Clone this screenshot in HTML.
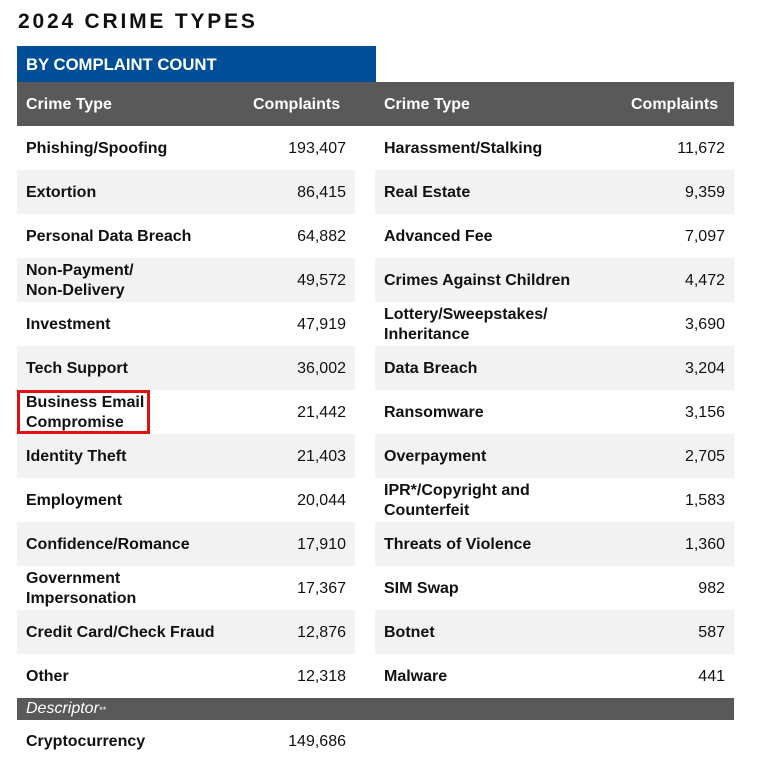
<!DOCTYPE html><html><head><style>
body{margin:0;width:757px;height:761px;background:#fff;font-family:"Liberation Sans",Arial,sans-serif;position:relative;overflow:hidden}
.t{position:absolute;left:18px;top:10px;font-size:21px;font-weight:bold;letter-spacing:2.8px;color:#111}
.blue{position:absolute;left:17px;top:46px;width:359px;height:36px;background:#004e98;color:#fff;font-weight:bold;font-size:16.7px;line-height:38px;box-sizing:border-box;padding-left:9px}
.hdr{position:absolute;left:17px;top:82px;width:717px;height:44px;background:#595959}
.c{position:absolute;font-size:16px;font-weight:bold;color:#111;line-height:20px;white-space:nowrap}
.n{position:absolute;font-size:16px;color:#111;text-align:right;line-height:20px}
.w{color:#fff}
.s{position:absolute;height:44px;background:#f2f2f2}
.desc{position:absolute;left:17px;top:698px;width:717px;height:22px;background:#595959;color:#fff;font-style:italic;font-size:16px;line-height:22px;padding-left:9px;box-sizing:border-box}
.red{position:absolute;left:17px;top:390px;width:133px;height:44px;border:3px solid #e01010;box-sizing:border-box}
</style></head><body>
<div class="t">2024 CRIME TYPES</div>
<div class="blue">BY COMPLAINT COUNT</div>
<div class="hdr"></div>
<div class="c w" style="left:26px;top:95px">Crime Type</div>
<div class="c w" style="left:253px;top:95px">Complaints</div>
<div class="c w" style="left:384px;top:95px">Crime Type</div>
<div class="c w" style="left:631px;top:95px">Complaints</div>
<div id="rows"></div>
<div class="desc">Descriptor<span style="font-size:9px">**</span></div>
<div class="c" style="left:26px;top:732px">Cryptocurrency</div>
<div class="n" style="left:250px;width:96px;top:732px">149,686</div>
<div class="red"></div>
<script>
var L=[["Phishing/Spoofing","193,407"],["Extortion","86,415"],["Personal Data Breach","64,882"],["Non-Payment/<br>Non-Delivery","49,572"],["Investment","47,919"],["Tech Support","36,002"],["Business Email<br>Compromise","21,442"],["Identity Theft","21,403"],["Employment","20,044"],["Confidence/Romance","17,910"],["Government<br>Impersonation","17,367"],["Credit Card/Check Fraud","12,876"],["Other","12,318"]];
var R=[["Harassment/Stalking","11,672"],["Real Estate","9,359"],["Advanced Fee","7,097"],["Crimes Against Children","4,472"],["Lottery/Sweepstakes/<br>Inheritance","3,690"],["Data Breach","3,204"],["Ransomware","3,156"],["Overpayment","2,705"],["IPR*/Copyright and<br>Counterfeit","1,583"],["Threats of Violence","1,360"],["SIM Swap","982"],["Botnet","587"],["Malware","441"]];
var h="";
for(var i=0;i<13;i++){var y=126+44*i;
if(i%2==1){h+='<div class="s" style="left:17px;width:338px;top:'+y+'px"></div><div class="s" style="left:375px;width:359px;top:'+y+'px"></div>';}
var two=L[i][0].indexOf("<br>")>0, tr=R[i][0].indexOf("<br>")>0;
h+='<div class="c" style="left:26px;top:'+(y+(two?3:13))+'px">'+L[i][0]+'</div>';
h+='<div class="n" style="left:250px;width:96px;top:'+(y+13)+'px">'+L[i][1]+'</div>';
h+='<div class="c" style="left:384px;top:'+(y+(tr?3:13))+'px">'+R[i][0]+'</div>';
h+='<div class="n" style="left:629px;width:96px;top:'+(y+13)+'px">'+R[i][1]+'</div>';}
document.getElementById("rows").innerHTML=h;
</script>
</body></html>
